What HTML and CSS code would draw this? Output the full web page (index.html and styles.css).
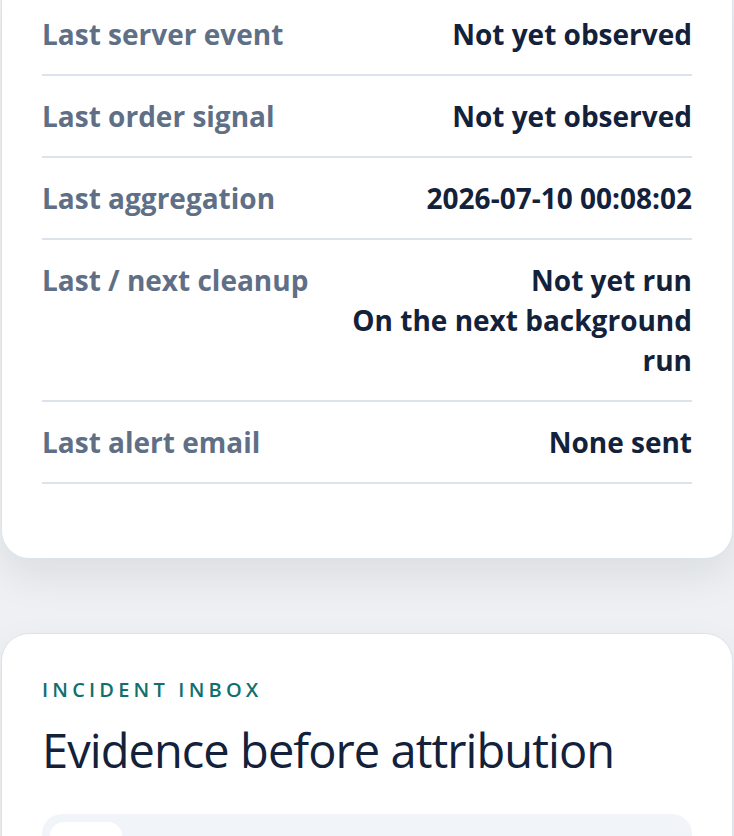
FILE: index.html
```html
<!DOCTYPE html>
<html lang="en">
<head>
    <meta charset="UTF-8">
    <meta name="viewport" content="width=device-width, initial-scale=1.0">
    <title>Store Health</title>
    <link rel="stylesheet" href="styles.css">
</head>
<body>
    <div class="page">
        <section class="card status-card">
            <dl class="status-list">
                <div class="status-row">
                    <dt>Last server event</dt>
                    <dd>Not yet observed</dd>
                </div>
                <div class="status-row">
                    <dt>Last order signal</dt>
                    <dd>Not yet observed</dd>
                </div>
                <div class="status-row">
                    <dt>Last aggregation</dt>
                    <dd>2026-07-10 00:08:02</dd>
                </div>
                <div class="status-row">
                    <dt>Last / next cleanup</dt>
                    <dd>
                        <span>Not yet run</span>
                        <span>On the next background run</span>
                    </dd>
                </div>
                <div class="status-row">
                    <dt>Last alert email</dt>
                    <dd>None sent</dd>
                </div>
            </dl>
        </section>

        <section class="card inbox-card">
            <p class="eyebrow">Incident inbox</p>
            <h2>Evidence before attribution</h2>
            <div class="tabs">
                <button class="tab active">All</button>
            </div>
        </section>
    </div>
</body>
</html>
```

FILE: styles.css
```css
body {
    margin: 0;
    background: #eef0f3;
    font-family: "Open Sans", "Noto Sans", sans-serif;
    color: #13213a;
}

.page {
    display: flex;
    flex-direction: column;
    gap: 74px;
    padding: 0 1px;
}

.card {
    background: #fff;
    border: 1px solid #dbe3ec;
    border-radius: 28px;
    box-shadow: 0 18px 40px rgba(15, 23, 42, 0.08);
    padding: 40px;
}

/* status card is scrolled, only its lower half shows */
.status-card {
    margin-top: -6px;
    border-top: none;
    border-radius: 0 0 28px 28px;
    padding-top: 0;
    padding-bottom: 74px;
}

.status-list {
    margin: 0;
}

.status-row {
    display: flex;
    justify-content: space-between;
    gap: 24px;
    padding: 20px 0;
    border-bottom: 2px solid #dbe3ec;
    font-size: 28px;
    line-height: 40px;
    font-weight: 700;
}

.status-row dt {
    color: #5f6f86;
    white-space: nowrap;
}

.status-row dd {
    margin: 0;
    text-align: right;
    color: #13213a;
}

.status-row dd span {
    display: block;
}

.inbox-card {
    padding-top: 42px;
}

.eyebrow {
    margin: 0;
    color: #11706e;
    font-size: 20px;
    font-weight: 600;
    letter-spacing: 0.21em;
    text-transform: uppercase;
}

h2 {
    margin: 18px 0 34px;
    font-size: 47px;
    font-weight: 400;
    letter-spacing: -0.02em;
    color: #13213a;
    line-height: 1.25;
}

.tabs {
    display: flex;
    background: #f1f5f9;
    border-radius: 20px;
    padding: 8px;
}

.tab {
    background: #fff;
    border: none;
    border-radius: 14px;
    min-width: 72px;
    padding: 22px 20px 18px;
    font-family: inherit;
    font-size: 16px;
    font-weight: 600;
    color: #13213a;
}
```
